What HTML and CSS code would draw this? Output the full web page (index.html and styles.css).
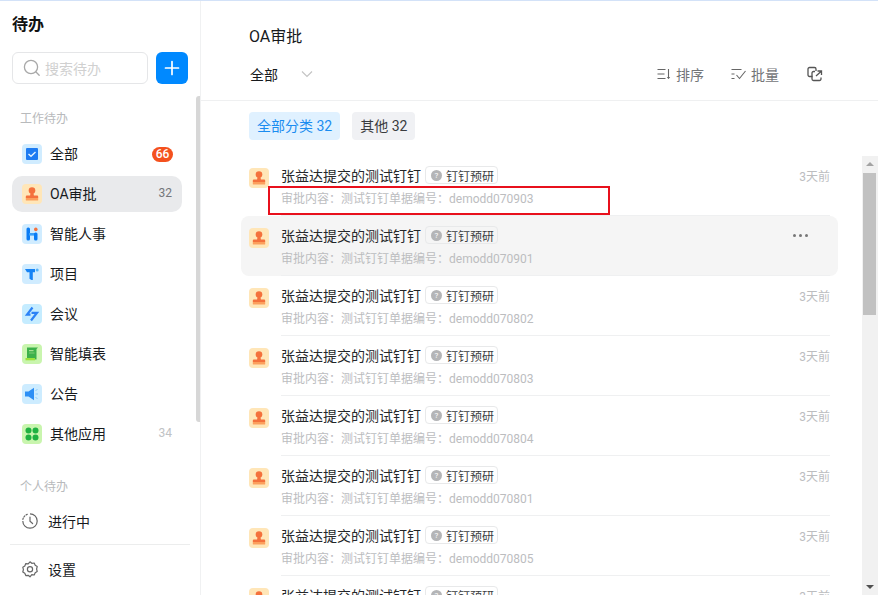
FILE: index.html
```html
<!DOCTYPE html>
<html lang="zh-CN">
<head>
<meta charset="utf-8">
<title>待办</title>
<link rel="stylesheet" href="styles.css">
</head>
<body>
<svg class="defs" width="0" height="0" aria-hidden="true">
  <symbol id="stamp" viewBox="0 0 20 20">
    <rect width="20" height="20" rx="4" fill="#ffe6b8"/>
    <circle cx="10" cy="6.500" r="3.300" fill="#f4713c"/>
    <path d="M8.600 8.500h2.800l.5 3h3c.8 0 1.300.5 1.300 1.300v1.200H3.800v-1.200c0-.8.500-1.300 1.300-1.300h3z" fill="#f4713c"/>
    <rect x="3.800" y="14" width="12.400" height="2.400" rx=".5" fill="#fc9f5c"/>
  </symbol>
</svg>
<div class="app">
  <aside class="sidebar">
    <h1 class="side-title">待办</h1>
    <div class="search-row">
      <div class="search">
        <svg class="search-icon" width="20" height="20" viewBox="0 0 20 20" fill="none" stroke="#a8a8a8" stroke-width="1.300"><circle cx="9" cy="9" r="6.600"/><path d="M14 14l3.200 3.200" stroke-linecap="round"/></svg>
        <span>搜索待办</span>
      </div>
      <div class="add-btn"><svg width="16" height="16" viewBox="0 0 16 16" stroke="#fff" stroke-width="1.700" stroke-linecap="round"><path d="M8 1.500v13M1.500 8h13"/></svg></div>
    </div>
    <div class="group-label first">工作待办</div>
    <nav class="nav">
      <div class="nav-item">
        <svg class="nav-icon" viewBox="0 0 20 20"><rect width="20" height="20" rx="4" fill="#d0ecff"/><rect x="4" y="4" width="12" height="12" rx="1" fill="#1d7bf2"/><path d="M6.500 10l2.500 2.300 4.500-4.300" fill="none" stroke="#e4f3ff" stroke-width="1.400"/></svg>
        <span class="nav-text">全部</span><span class="badge">66</span>
      </div>
      <div class="nav-item active">
        <svg class="nav-icon"><use href="#stamp"/></svg>
        <span class="nav-text">OA审批</span><span class="count dark">32</span>
      </div>
      <div class="nav-item">
        <svg class="nav-icon" viewBox="0 0 20 20"><rect width="20" height="20" rx="4" fill="#d0ecff"/><rect x="4.500" y="3.500" width="3.500" height="13" rx="1.500" fill="#0a7cf5"/><rect x="7" y="9" width="6" height="2.600" fill="#3aa0f8"/><rect x="12" y="8.500" width="3.500" height="8" rx="1.500" fill="#0a7cf5"/><circle cx="13.800" cy="5.400" r="1.800" fill="#f4713c"/></svg>
        <span class="nav-text">智能人事</span>
      </div>
      <div class="nav-item">
        <svg class="nav-icon" viewBox="0 0 20 20"><rect width="20" height="20" rx="4" fill="#d0ecff"/><path d="M3 5h10v3.200h-2.200V16H9.500L7.500 14.800V8.200H5z" fill="#1583f5"/><circle cx="15.200" cy="6" r="1.500" fill="#57b4f8"/></svg>
        <span class="nav-text">项目</span>
      </div>
      <div class="nav-item">
        <svg class="nav-icon" viewBox="0 0 20 20"><rect width="20" height="20" rx="4" fill="#c5ecff"/><path d="M10.500 3.500L5 10.700h3.500M9.500 8.800H15L9 16.500" fill="none" stroke="#2c82f6" stroke-width="2.200"/></svg>
        <span class="nav-text">会议</span>
      </div>
      <div class="nav-item">
        <svg class="nav-icon" viewBox="0 0 20 20"><rect width="20" height="20" rx="4" fill="#c9f5ae"/><path d="M5 3.500h11l-1.500 1.500v10.500l-9.500-.5z" fill="#3cb14a"/><rect x="7" y="6" width="4.500" height="1.200" fill="#a4e08f"/><rect x="7" y="8.500" width="5.500" height="1" fill="#7fce74"/><rect x="3.500" y="14" width="9.500" height="2.300" fill="#9be23c"/></svg>
        <span class="nav-text">智能填表</span>
      </div>
      <div class="nav-item">
        <svg class="nav-icon" viewBox="0 0 20 20"><rect width="20" height="20" rx="4" fill="#cdecff"/><path d="M3 7.500h3.500L12 3.800v12.400L6.500 12.500H3z" fill="#2d8ff5"/><path d="M13.500 6.500l2-1M13.500 10h2.500M13.500 13.500l2 1" stroke="#8ccbfa" stroke-width="1"/></svg>
        <span class="nav-text">公告</span>
      </div>
      <div class="nav-item">
        <svg class="nav-icon" viewBox="0 0 20 20"><rect width="20" height="20" rx="4" fill="#c9f5ae"/><g fill="#1fb141"><circle cx="6.500" cy="6.500" r="3"/><circle cx="13.500" cy="6.500" r="3"/><circle cx="6.500" cy="13.500" r="3"/><circle cx="13.500" cy="13.500" r="3"/></g></svg>
        <span class="nav-text">其他应用</span><span class="count">34</span>
      </div>
    </nav>
    <div class="group-label second">个人待办</div>
    <div class="plain-item">
      <svg width="16" height="16" viewBox="0 0 16 16" fill="none" stroke="#666" stroke-width="1.200"><path d="M8 .8a7.200 7.200 0 1 1-7.200 7.200"/><path d="M.9 6.300l.3-1.200M2 3.800l.8-.9M4.200 1.900l1.100-.6" stroke-linecap="round"/><path d="M8 4v4.300l2.600 2.200" stroke-linecap="round"/></svg>
      <span>进行中</span>
    </div>
    <div class="side-divider"></div>
    <div class="plain-item settings">
      <svg width="16" height="17" viewBox="0 0 16 17" fill="none" stroke="#666" stroke-width="1.200"><path d="M8 .8l1.800 1.500 2.400-.3 1 2.300 2 1.300-.6 2.400.6 2.400-2 1.300-1 2.300-2.400-.3L8 15.800l-1.800-1.500-2.400.3-1-2.300-2-1.300.6-2.400L.8 6.200l2-1.300 1-2.300 2.400.3z" stroke-linejoin="round"/><circle cx="8" cy="8.300" r="2.600"/></svg>
      <span>设置</span>
    </div>
    <div class="side-thumb"></div>
  </aside>
  <main class="main">
    <header class="head">
      <h2 class="head-title">OA审批</h2>
      <div class="head-bar">
        <div class="filter">
          <span>全部</span>
          <svg width="12" height="8" viewBox="0 0 12 8" fill="none" stroke="#c4c4c4" stroke-width="1.200"><path d="M1 1.500l5 5 5-5"/></svg>
        </div>
        <div class="tools">
          <div class="tool">
            <svg width="14" height="14" viewBox="0 0 14 14" fill="none" stroke="#666" stroke-width="1.100"><path d="M.5 2.500h8M.5 7h7M.5 11.500h8M11.500 2v9.500"/><path d="M9.800 10l1.700 2 1.700-2z" fill="#666" stroke="none"/></svg>
            <span>排序</span>
          </div>
          <div class="tool">
            <svg width="15" height="14" viewBox="0 0 15 14" fill="none" stroke="#666" stroke-width="1.100"><path d="M.5 2.500h10M.5 7h3M.5 11.500h3M5.500 8l3 3.500 6-7.500"/></svg>
            <span>批量</span>
          </div>
          <svg class="tool-open" width="16" height="16" viewBox="0 0 16 16" fill="none" stroke="#555" stroke-width="1.300"><path d="M5.500 10.500h-3a1.500 1.500 0 0 1-1.500-1.500V3a1.500 1.500 0 0 1 1.500-1.500h5A1.500 1.500 0 0 1 9 3v2"/><path d="M8 5.500H6.500A1.500 1.500 0 0 0 5 7v6a1.500 1.500 0 0 0 1.500 1.500h6A1.500 1.500 0 0 0 14 13v-1.500"/><path d="M9 10l5-4.500M10.500 5H14.500V9"/></svg>
        </div>
      </div>
    </header>
    <div class="chips">
      <span class="chip on">全部分类 32</span>
      <span class="chip">其他 32</span>
    </div>
    <div class="list-wrap">
      <div class="list">
        <article class="row">
          <svg class="row-icon"><use href="#stamp"/></svg>
          <div class="row-body">
            <div class="row-line"><span class="row-title">张益达提交的测试钉钉</span><span class="tag"><i class="tag-dot">?</i>钉钉预研</span><span class="time">3天前</span></div>
            <div class="row-sub">审批内容：测试钉钉单据编号：demodd070903</div>
          </div>
        </article>
        <article class="row hover">
          <svg class="row-icon"><use href="#stamp"/></svg>
          <div class="row-body">
            <div class="row-line"><span class="row-title">张益达提交的测试钉钉</span><span class="tag"><i class="tag-dot">?</i>钉钉预研</span><span class="more"><b></b><b></b><b></b></span></div>
            <div class="row-sub">审批内容：测试钉钉单据编号：demodd070901</div>
          </div>
        </article>
        <article class="row">
          <svg class="row-icon"><use href="#stamp"/></svg>
          <div class="row-body">
            <div class="row-line"><span class="row-title">张益达提交的测试钉钉</span><span class="tag"><i class="tag-dot">?</i>钉钉预研</span><span class="time">3天前</span></div>
            <div class="row-sub">审批内容：测试钉钉单据编号：demodd070802</div>
          </div>
        </article>
        <article class="row">
          <svg class="row-icon"><use href="#stamp"/></svg>
          <div class="row-body">
            <div class="row-line"><span class="row-title">张益达提交的测试钉钉</span><span class="tag"><i class="tag-dot">?</i>钉钉预研</span><span class="time">3天前</span></div>
            <div class="row-sub">审批内容：测试钉钉单据编号：demodd070803</div>
          </div>
        </article>
        <article class="row">
          <svg class="row-icon"><use href="#stamp"/></svg>
          <div class="row-body">
            <div class="row-line"><span class="row-title">张益达提交的测试钉钉</span><span class="tag"><i class="tag-dot">?</i>钉钉预研</span><span class="time">3天前</span></div>
            <div class="row-sub">审批内容：测试钉钉单据编号：demodd070804</div>
          </div>
        </article>
        <article class="row">
          <svg class="row-icon"><use href="#stamp"/></svg>
          <div class="row-body">
            <div class="row-line"><span class="row-title">张益达提交的测试钉钉</span><span class="tag"><i class="tag-dot">?</i>钉钉预研</span><span class="time">3天前</span></div>
            <div class="row-sub">审批内容：测试钉钉单据编号：demodd070801</div>
          </div>
        </article>
        <article class="row">
          <svg class="row-icon"><use href="#stamp"/></svg>
          <div class="row-body">
            <div class="row-line"><span class="row-title">张益达提交的测试钉钉</span><span class="tag"><i class="tag-dot">?</i>钉钉预研</span><span class="time">3天前</span></div>
            <div class="row-sub">审批内容：测试钉钉单据编号：demodd070805</div>
          </div>
        </article>
        <article class="row">
          <svg class="row-icon"><use href="#stamp"/></svg>
          <div class="row-body">
            <div class="row-line"><span class="row-title">张益达提交的测试钉钉</span><span class="tag"><i class="tag-dot">?</i>钉钉预研</span><span class="time">3天前</span></div>
            <div class="row-sub">审批内容：测试钉钉单据编号：demodd070806</div>
          </div>
        </article>
      </div>
      <div class="scrollbar">
        <div class="arrow up"></div>
        <div class="thumb"></div>
        <div class="arrow down"></div>
      </div>
      <div class="highlight"></div>
    </div>
  </main>
</div>
</body>
</html>
```
FILE: styles.css
```css
* { box-sizing: border-box; }
html, body { margin: 0; height: 100%; overflow: hidden; background: #fff; }
body {
  font-family: "Roboto", "Noto Sans CJK SC", sans-serif;
  font-size: 14px;
  color: #171a1d;
}
.defs { position: absolute; }
.app { display: flex; height: 595px; border-top: 1px solid #d3e2f8; }

/* Sidebar */
.sidebar {
  position: relative;
  flex: 0 0 201px;
  border-right: 1px solid #f0f1f2;
  padding: 0 0 0 12px;
  display: flex;
  flex-direction: column;
  overflow: hidden;
}
.side-title { margin: 13px 0 0; font-size: 16px; line-height: 22px; font-weight: 700; color: #111; }
.search-row { display: flex; gap: 8px; margin-top: 16px; }
.search {
  width: 136px; height: 32px;
  border: 1px solid #e5e6e8; border-radius: 6px;
  display: flex; align-items: center; gap: 3px; padding-left: 9px;
  color: #d0d0d0; font-size: 14px;
}
.add-btn {
  width: 32px; height: 32px; border-radius: 6px; background: #0089ff;
  display: flex; align-items: center; justify-content: center;
}
.group-label { font-size: 12px; line-height: 18px; color: #b8babc; padding-left: 8px; }
.group-label.first { margin-top: 26px; }
.group-label.second { margin-top: 26px; }
.nav { display: flex; flex-direction: column; gap: 4px; width: 170px; margin-top: 8px; }
.nav-item {
  height: 36px; display: flex; align-items: center;
  padding: 0 10px; border-radius: 10px;
}
.nav-item.active { background: #e9eaec; }
.nav-icon { width: 20px; height: 20px; margin-right: 8px; flex: none; }
.nav-text { flex: 1; color: #171a1d; padding-bottom: 2px; }
.badge {
  background: #f4511e; color: #fff; font-size: 12px; font-weight: 500;
  border-radius: 8px; width: 21px; height: 15px; line-height: 15px; text-align: center; margin-right: -1px;
}
.count { font-size: 12px; color: #c0c2c4; padding-bottom: 2px; }
.count.dark { color: #74767a; }
.plain-item { display: flex; align-items: center; gap: 10px; height: 36px; padding-left: 10px; margin-top: 7px; }
.settings { margin-top: 6px; }
.side-divider { width: 180px; height: 1px; background: #eceded; margin: 5px 0 0 -2px; }
.side-thumb {
  position: absolute; right: 0; top: 95px;
  width: 4px; height: 326px; background: #d7d7d7; border-radius: 3px 0 0 3px;
}

/* Main */
.main { flex: 1; min-width: 0; display: flex; flex-direction: column; height: 594px; }
.head { height: 100px; border-bottom: 1px solid #eff0f1; padding: 0 55px 0 48px; }
.head-title { margin: 25px 0 0; font-size: 16px; line-height: 22px; font-weight: 400; }
.head-bar { display: flex; justify-content: space-between; align-items: center; margin-top: 14px; height: 24px; }
.filter { display: flex; align-items: center; gap: 23px; padding-left: 1px; }
.tools { display: flex; align-items: center; color: #737578; }
.tool { display: flex; align-items: center; gap: 5px; margin-right: 27px; }
.tool + .tool { margin-right: 28px; }
.chips { display: flex; gap: 12px; padding: 11px 0 0 48px; height: 55px; flex: none; }
.chip {
  height: 28px; line-height: 28px; padding: 0 8px; border-radius: 4px;
  background: #f0f1f4; color: #3a3c3f;
}
.chip.on { background: #e0f1ff; color: #1a8cf0; }

/* List */
.list-wrap { position: relative; flex: 1; min-height: 0; display: flex; overflow: hidden; }
.list { flex: 1; min-width: 0; padding: 0 24px 0 40px; }
.row { display: flex; height: 60px; padding: 0 8px; border-radius: 8px; }
.row-icon { width: 20px; height: 20px; margin: 12px 12px 0 0; flex: none; }
.row-body { flex: 1; min-width: 0; border-bottom: 1px solid #eff0f1; padding-top: 9px; }
.row.hover { background: #f5f5f5; }
.row-line { display: flex; align-items: center; height: 20px; }
.row-title { color: #25272a; }
.tag {
  display: flex; align-items: center; gap: 4px;
  height: 18px; width: 73px; margin-left: 4px; padding-left: 5px;
  border: 1px solid #e8e9ea; border-radius: 4px;
  font-size: 12px; color: #3c3e41;
}
.tag-dot {
  width: 11px; height: 11px; border-radius: 50%; background: #b4b5b7;
  color: #fff; font-size: 8px; line-height: 11px; text-align: center; font-style: normal;
}
.time { margin-left: auto; font-size: 12px; color: #bcbdbf; }
.more { margin-left: auto; display: flex; gap: 3px; margin-right: 22px; }
.more b { width: 3px; height: 3px; border-radius: 50%; background: #777; }
.row-sub { margin-top: 5px; font-size: 12px; line-height: 18px; color: #bcbdbf; }
.scrollbar {
  flex: 0 0 16px; background: #f1f1f1; padding: 0 2px 0 1px;
  display: flex; flex-direction: column; align-items: center;
}
.arrow { width: 0; height: 0; border-left: 4px solid transparent; border-right: 4px solid transparent; }
.arrow.up { border-bottom: 4px solid #a3a3a3; margin: 6px 0 7px; }
.arrow.down { border-top: 4px solid #505050; margin: auto 0 6px; }
.thumb { width: 13px; height: 142px; background: #c1c1c1; }
.highlight {
  position: absolute; left: 67px; top: 30px;
  width: 342px; height: 29px; border: 2px solid #e8101c;
}
```
